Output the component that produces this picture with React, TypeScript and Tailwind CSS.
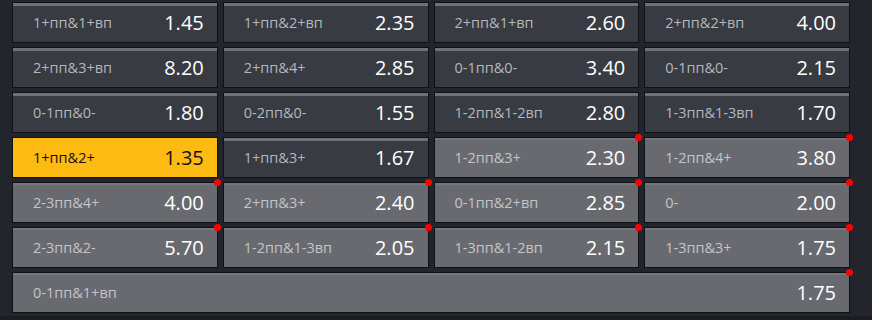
import React from 'react';

type Kind = 'dark' | 'light' | 'active';

interface Odd {
  label: string;
  value: string;
  kind: Kind;
  dot?: boolean;
}

const rows: Odd[][] = [
  [
    { label: '1+пп&1+вп', value: '1.45', kind: 'dark' },
    { label: '1+пп&2+вп', value: '2.35', kind: 'dark' },
    { label: '2+пп&1+вп', value: '2.60', kind: 'dark' },
    { label: '2+пп&2+вп', value: '4.00', kind: 'dark' },
  ],
  [
    { label: '2+пп&3+вп', value: '8.20', kind: 'dark' },
    { label: '2+пп&4+', value: '2.85', kind: 'dark' },
    { label: '0-1пп&0-', value: '3.40', kind: 'dark' },
    { label: '0-1пп&0-', value: '2.15', kind: 'dark' },
  ],
  [
    { label: '0-1пп&0-', value: '1.80', kind: 'dark' },
    { label: '0-2пп&0-', value: '1.55', kind: 'dark' },
    { label: '1-2пп&1-2вп', value: '2.80', kind: 'dark' },
    { label: '1-3пп&1-3вп', value: '1.70', kind: 'dark' },
  ],
  [
    { label: '1+пп&2+', value: '1.35', kind: 'active' },
    { label: '1+пп&3+', value: '1.67', kind: 'dark' },
    { label: '1-2пп&3+', value: '2.30', kind: 'light', dot: true },
    { label: '1-2пп&4+', value: '3.80', kind: 'light', dot: true },
  ],
  [
    { label: '2-3пп&4+', value: '4.00', kind: 'light', dot: true },
    { label: '2+пп&3+', value: '2.40', kind: 'light', dot: true },
    { label: '0-1пп&2+вп', value: '2.85', kind: 'light', dot: true },
    { label: '0-', value: '2.00', kind: 'light', dot: true },
  ],
  [
    { label: '2-3пп&2-', value: '5.70', kind: 'light', dot: true },
    { label: '1-2пп&1-3вп', value: '2.05', kind: 'light', dot: true },
    { label: '1-3пп&1-2вп', value: '2.15', kind: 'light', dot: true },
    { label: '1-3пп&3+', value: '1.75', kind: 'light', dot: true },
  ],
];

const kindClass: Record<Kind, string> = {
  dark: 'bg-[#383b42] shadow-[inset_0_3px_0_#6f7176]',
  light: 'bg-[#686a70] shadow-[inset_0_2px_0_#74767b]',
  active: 'bg-[#fdba13]',
};

// single odds button
const Cell: React.FC<{ odd: Odd; wide?: boolean }> = ({ odd, wide }) => {
  const active = odd.kind === 'active';
  return (
    <div
      className={`relative flex h-[41px] items-center justify-between border border-[#101114] pl-[20px] pr-[13px] ${kindClass[odd.kind]} ${wide ? 'col-span-4' : ''}`}
    >
      <span
        className={`text-[14.5px] ${active ? 'text-[#111]' : odd.kind === 'light' ? 'text-[#c3c5c8]' : 'text-[#b4b7bc]'}`}
      >
        {odd.label}
      </span>
      <span className={`pt-[1px] text-[20px] ${active ? 'text-[#111]' : 'text-white'}`}>{odd.value}</span>
      {odd.dot && (
        <span className="absolute -right-[4px] -top-[4px] h-[7px] w-[7px] rounded-full bg-[#ff0000]" />
      )}
    </div>
  );
};

export default function App() {
  return (
    <div
      className="h-[320px] w-[872px] bg-[#1b1d21]"
      style={{ fontFamily: '"Open Sans", "Noto Sans", sans-serif' }}
    >
      <div className="h-[316px] bg-[#22252b] pl-[12px] pt-[2px]">
        <div className="grid w-[838px] grid-cols-4 gap-x-[5px] gap-y-[4px]">
          {rows.flat().map((odd, i) => (
            <Cell key={i} odd={odd} />
          ))}
          <Cell odd={{ label: '0-1пп&1+вп', value: '1.75', kind: 'light', dot: true }} wide />
        </div>
      </div>
    </div>
  );
}
